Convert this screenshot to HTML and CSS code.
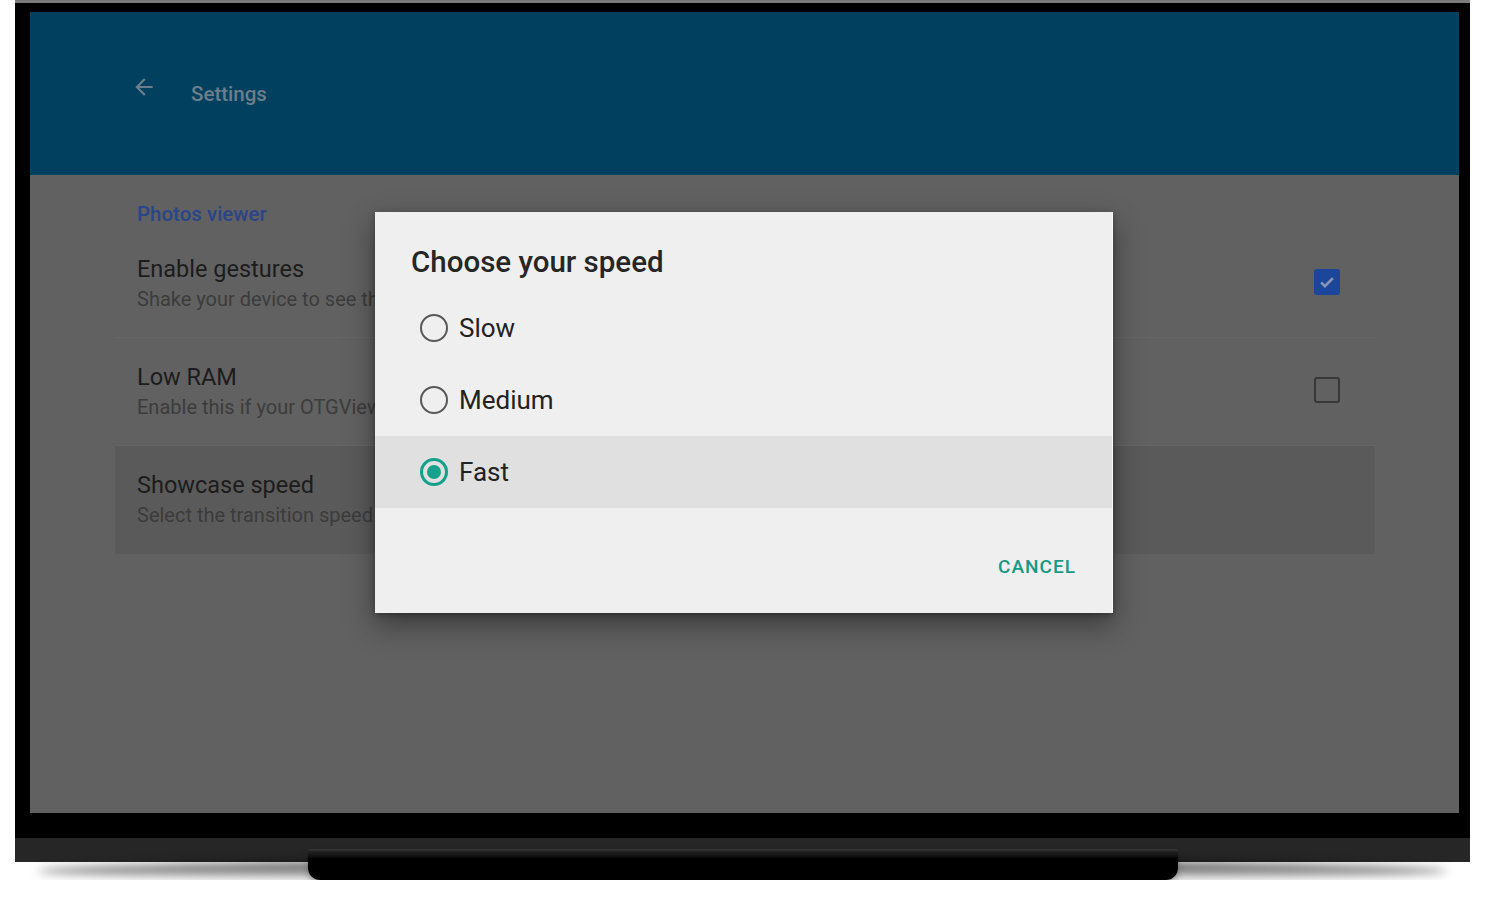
FILE: index.html
```html
<!DOCTYPE html>
<html>
<head>
    <title>Settings - Showcase speed</title>
    <link rel="stylesheet" href="styles.css">
</head>
<body>
    <div class="tv">
        <div class="bezel">
            <div class="screen">
                <header class="appbar">
                    <svg class="back" viewBox="0 0 24 24" width="26" height="26">
                        <path d="M20 11H7.83l5.59-5.59L12 4l-8 8 8 8 1.41-1.41L7.83 13H20v-2z"/>
                    </svg>
                    <span class="appbar-title">Settings</span>
                </header>

                <main class="prefs">
                    <div class="pref-category">Photos viewer</div>

                    <div class="pref-row">
                        <div class="pref-text">
                            <div class="pref-title">Enable gestures</div>
                            <div class="pref-summary">Shake your device to see the next photo</div>
                        </div>
                        <span class="checkbox checked">
                            <svg viewBox="0 0 24 24" width="20" height="20">
                                <path d="M5 12.5l4.5 4.5L19 7.5"/>
                            </svg>
                        </span>
                    </div>

                    <div class="pref-row">
                        <div class="pref-text">
                            <div class="pref-title">Low RAM</div>
                            <div class="pref-summary">Enable this if your OTGViewer is slow</div>
                        </div>
                        <span class="checkbox"></span>
                    </div>

                    <div class="pref-row selected">
                        <div class="pref-text">
                            <div class="pref-title">Showcase speed</div>
                            <div class="pref-summary">Select the transition speed of the showcase</div>
                        </div>
                    </div>
                </main>

                <div class="dialog">
                    <h2 class="dialog-title">Choose your speed</h2>
                    <div class="options">
                        <div class="option"><span class="radio"></span>Slow</div>
                        <div class="option"><span class="radio"></span>Medium</div>
                        <div class="option focused"><span class="radio on"></span>Fast</div>
                    </div>
                    <div class="actions">
                        <span class="btn">CANCEL</span>
                    </div>
                </div>
            </div>
        </div>
        <div class="base"></div>
        <div class="stand"></div>
    </div>
</body>
</html>
```

FILE: styles.css
```css
body {
    margin: 0;
    background-color: #fff;
    font-family: Roboto, "Liberation Sans", sans-serif;
}

.tv {
    width: 1455px;
    margin-left: 15px;
}

.bezel {
    background-color: #000;
    border-top: 3px solid #7b7b7b;
    padding: 9px 11px 25px 15px;
}

.screen {
    position: relative;
    height: 801px;
    background-color: #616161;
    overflow: hidden;
}

.appbar {
    height: 163px;
    background-color: #01415f;
    display: flex;
    align-items: center;
    padding-left: 101px;
    box-sizing: border-box;
}

.back {
    fill: #6c7d8b;
    margin-top: -14px;
}

.appbar-title {
    color: #6c7d8b;
    font-size: 20.5px;
    font-weight: 500;
    margin-left: 34px;
}

.prefs {
    padding-top: 26px;
}

.pref-category {
    color: #2a4588;
    font-size: 20.5px;
    font-weight: 500;
    line-height: 26px;
    padding-left: 107px;
    margin-bottom: 3px;
}

.pref-row {
    width: 1260px;
    height: 108px;
    margin-left: 85px;
    padding: 25px 35px 0 22px;
    box-sizing: border-box;
    display: flex;
    justify-content: space-between;
    border-bottom: 1px solid #666;
}

.pref-row.selected {
    background-color: #5a5a5a;
    border-bottom: none;
}

.pref-title {
    color: #1c1c1c;
    font-size: 23.5px;
    line-height: 28px;
}

.pref-summary {
    color: #3c3c3c;
    font-size: 20px;
    line-height: 24px;
    margin-top: 4px;
}

.checkbox {
    width: 26px;
    height: 26px;
    margin-top: 14px;
    box-sizing: border-box;
    border: 2px solid #383838;
    border-radius: 3px;
    display: flex;
    align-items: center;
    justify-content: center;
}

.checkbox.checked {
    background-color: #1c469c;
    border-color: #1c469c;
}

.checkbox svg path {
    fill: none;
    stroke: #8a96b0;
    stroke-width: 3;
}

.dialog {
    position: absolute;
    left: 345px;
    top: 200px;
    width: 738px;
    height: 401px;
    background-color: #efefef;
    box-shadow: 0 12px 28px rgba(0, 0, 0, 0.4), 0 2px 6px rgba(0, 0, 0, 0.3);
    border-right: 1px solid #fafafa;
    box-sizing: border-box;
    padding-top: 32px;
}

.dialog-title {
    margin: 0 0 12px 36px;
    color: #262626;
    font-size: 29.5px;
    font-weight: 500;
    line-height: 36px;
}

.option {
    height: 72px;
    display: flex;
    align-items: center;
    padding-left: 45px;
    color: #222;
    font-size: 26px;
}

.option.focused {
    background-color: #e0e0e0;
}

.radio {
    width: 28px;
    height: 28px;
    box-sizing: border-box;
    border: 2px solid #585858;
    border-radius: 50%;
    margin-right: 11px;
    display: flex;
    align-items: center;
    justify-content: center;
}

.radio.on {
    border: 3px solid #14a08a;
}

.radio.on::after {
    content: "";
    width: 14px;
    height: 14px;
    border-radius: 50%;
    background-color: #14a08a;
}

.actions {
    display: flex;
    justify-content: flex-end;
    padding: 48px 36px 0 0;
}

.btn {
    color: #169985;
    font-size: 19px;
    font-weight: 500;
    line-height: 22px;
    letter-spacing: 1px;
}

.base {
    position: relative;
    height: 24px;
    background-color: #262626;
}

/* floor shadow under the frame */
.base::after {
    content: "";
    position: absolute;
    left: 22px;
    right: 22px;
    top: 22px;
    height: 22px;
    border-radius: 50%;
    background: linear-gradient(rgba(0, 0, 0, 0.85), rgba(0, 0, 0, 0.3) 65%, rgba(0, 0, 0, 0));
    filter: blur(5px);
}

.stand {
    position: relative;
    z-index: 1;
    width: 870px;
    height: 31px;
    margin: -13px auto 0;
    background: linear-gradient(#3a3a3a 0, #1f1f1f 3px, #111 7px, #000 10px);
    border-radius: 2px 2px 12px 12px;
    box-shadow: 0 4px 6px rgba(0, 0, 0, 0.25);
}
```
